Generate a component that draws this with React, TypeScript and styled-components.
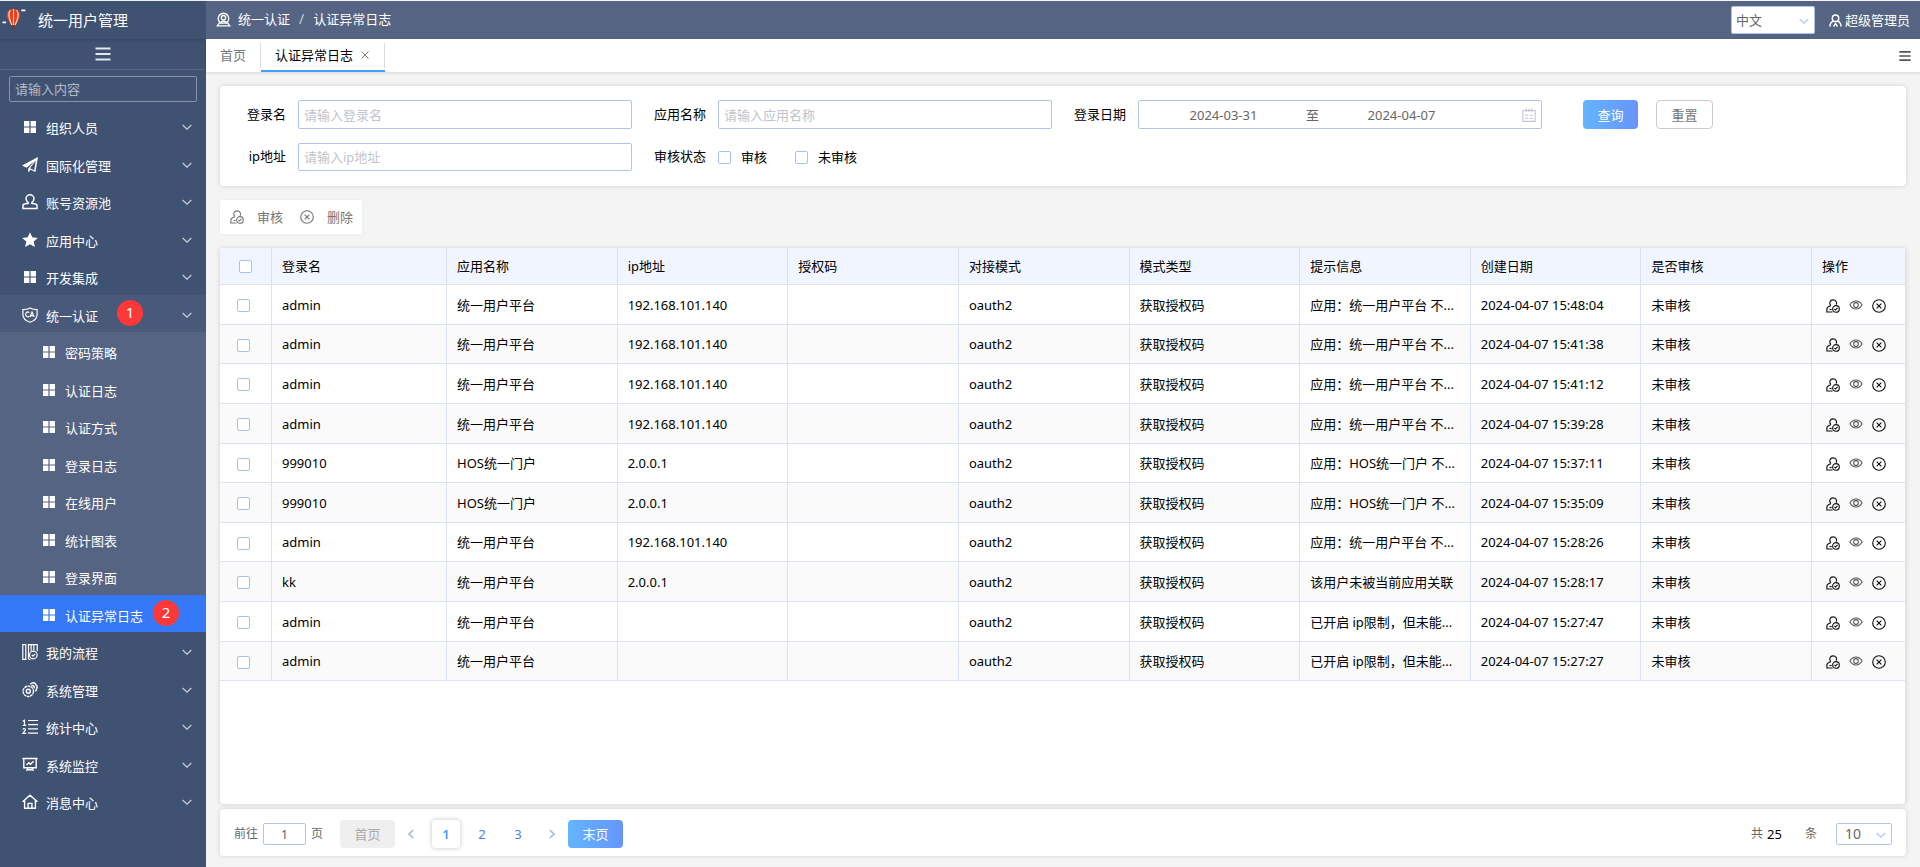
import React from 'react';
import styled, { createGlobalStyle } from 'styled-components';

const GlobalStyle = createGlobalStyle`
  *, *::before, *::after { box-sizing: border-box; }
  html, body, #root { height: 100%; }
  body {
    margin: 0;
    background: #f4f4f4;
    color: #000;
    font: 13px/20px "Noto Sans", "Noto Sans CJK SC", sans-serif;
  }
  button, input, select { font: inherit; color: inherit; margin: 0; }
  button { border: 0; background: none; padding: 0; cursor: pointer; }
  a { color: inherit; text-decoration: none; }
  ul, ol { list-style: none; margin: 0; padding: 0; }
  svg { display: block; flex: none; }
`;

/* ---------- icons ---------- */

type IconProps = { size?: number };

const Line = ({ size = 16, children, width = 1.2 }: IconProps & { children: React.ReactNode; width?: number }) => (
  <svg width={size} height={size} viewBox="0 0 16 16" fill="none" stroke="currentColor" strokeWidth={width} aria-hidden="true">
    {children}
  </svg>
);

const GridIcon = () => (
  <svg width="16" height="16" viewBox="0 0 16 16" fill="currentColor" aria-hidden="true">
    <path d="M2 2h5.400v5.400H2zM8.600 2H14v5.400H8.600zM2 8.600h5.400V14H2zM8.600 8.600H14V14H8.600z" />
  </svg>
);
const PlaneIcon = () => (
  <svg width="16" height="16" viewBox="0 0 16 16" fill="currentColor" aria-hidden="true">
    <path fillRule="evenodd" d="M16 0 0 8.600l4.600 2.200L12.600 4 6.200 11.600V15.600l2.400-2.900 4.800 2.300zM8 11.200l5.800-7.600-1.600 9.600z" />
  </svg>
);
const StampIcon = () => (
  <Line width={1.5}>
    <path d="M6.300 8.600C4.600 7.400 4 6.300 4 4.800a4 4 0 0 1 8 0c0 1.500-.6 2.600-2.300 3.800M6.300 8.500v.8L2.500 10c-1 .2-1.500.8-1.500 1.600v2.800h14v-2.800c0-.8-.5-1.400-1.500-1.600l-3.800-.7v-.8" />
  </Line>
);
const StarIcon = () => (
  <svg width="16" height="16" viewBox="0 0 16 16" fill="currentColor" aria-hidden="true">
    <path d="m8 .3 2.300 5 5.500.6-4.100 3.700 1.200 5.500L8 12.300l-4.900 2.800 1.200-5.500L.2 5.900l5.500-.6z" />
  </svg>
);
const ShieldIcon = () => (
  <Line width={1.2}>
    <path d="M8 .9c2 1.200 4.400 1.700 7.100 1.700v5c0 3.700-2.700 6.300-7.100 7.700C3.600 13.900.9 11.300.9 7.600v-5C3.600 2.600 6 2.100 8 .9z" />
    <path d="M7.300 5.600a2.300 2.300 0 1 0 0 3.600M8 10l2-5 2.200 5M8.800 8.600h2.700" />
  </Line>
);
const BooksIcon = () => (
  <Line width={1.2}>
    <path d="M.8.7v14.600h3V.7zM6.500 15.300V.7h2.600v6M9.100.7h2.700v5.500M11.800.7h3.400v6.600M6.500 15.300h2" />
    <circle cx="11.300" cy="11" r="3.800" />
    <path d="m9.800 11 1.100 1.200L13 10" />
  </Line>
);
const GearsIcon = () => (
  <Line width={1.4}>
    <circle cx="6.300" cy="9.300" r="5.200" strokeDasharray="2.800 .5" />
    <circle cx="6.300" cy="9.300" r="2" />
    <path d="M8.200 2.300c2-1.700 4.200-1.500 5.200-.6.500.5.500 1.100.6 1.500.9.500 1.300 1.200 1.200 2.300-.2.400-.6.700-.7 1.100.2 1-.2 2-1.300 2.600M9.500 3.600c1.800-.5 3.100.9 2.900 2.700" />
  </Line>
);
const OrderedIcon = () => (
  <Line width={1.2}>
    <path d="M6 1.500h10M6 5.700h10M6 9.900h10M6 14.100h10" />
    <path d="M.8 2.200 2.500 1.300v5M.8 6.300h3.400M.8 10.500c.8-1.300 3-.9 2.600.6L.9 14.300h3.400" />
  </Line>
);
const BoardIcon = () => (
  <Line width={1.4}>
    <path d="M.4 1.500h15.200M1.800 1.500v9.300h12.400V1.500M4.500 7.900l2.300-2.100 1.600 1.500 3.200-3M5.800 11 4.600 14M10.200 11l1.200 3M6 12.800h4" />
  </Line>
);
const HomeIcon = () => (
  <Line width={1.4}>
    <path d="m.6 7.800 7.400-6.600 7.400 6.600M2.600 6.500v7.700h10.800V6.500M6.100 14V9.400h3.800V14" />
  </Line>
);
const MenuIcon = ({ size = 16 }: IconProps) => (
  <Line size={size} width={2.2}>
    <path d="M.5 2.500h15M.5 8h15M.5 13.500h15" />
  </Line>
);
const ChevronIcon = ({ size = 10 }: IconProps) => (
  <svg width={size} height={size} viewBox="0 0 10 10" fill="none" stroke="currentColor" strokeWidth="1.200" aria-hidden="true">
    <path d="M.7 3 5 7.200 9.300 3" />
  </svg>
);
const SideChevron = ({ left }: { left?: boolean }) => (
  <svg width="12" height="12" viewBox="0 0 12 12" fill="none" stroke="currentColor" strokeWidth="1.700" aria-hidden="true">
    <path d={left ? 'M8.200 2 4 6l4.200 4' : 'M3.800 2 8 6l-4.200 4'} />
  </svg>
);
const PinUserIcon = () => (
  <Line size={15} width={1.4}>
    <path d="M4.800 11.500A5.600 5.600 0 1 1 11.200 11.500M4.300 10.900 1.300 14.800h13.400l-3-3.900" />
    <circle cx="8" cy="6" r="2.300" />
    <path d="M4.800 11.800c.6-2.600 5.800-2.600 6.400 0z" />
  </Line>
);
const AdminIcon = () => (
  <Line size={13} width={1.7}>
    <circle cx="8" cy="5.200" r="4" />
    <path d="M5.500 8.600C2.700 10 1.200 12 1 15.500M10.500 8.600c2.800 1.400 4.300 3.400 4.500 6.900M5.600 15.500 8 11.500l2.400 4" />
  </Line>
);
const AuditIcon = ({ size = 14 }: IconProps) => (
  <Line size={size} width={1.3}>
    <path d="M5.600 7.500C3 5 4.500 1 8 1s5 3.200 3.500 5.500M5.600 7.500C3 8.500 1 9.200 1 11v3.800h6.500" />
    <path d="M4 12h2.500" />
    <circle cx="11.400" cy="11.300" r="3.800" />
    <path d="m9.700 11.300 1.200 1.300 2.300-2.500" />
  </Line>
);
const EyeIcon = () => (
  <Line size={14} width={1.2}>
    <path d="M1 8c3.800-6 10.200-6 14 0-3.800 6-10.200 6-14 0z" />
    <circle cx="8" cy="8" r="2.700" />
  </Line>
);
const CloseCircleIcon = () => (
  <Line size={14} width={1.3}>
    <circle cx="8" cy="8" r="7.200" />
    <path d="m5.300 5.300 5.400 5.400M10.700 5.300l-5.400 5.400" />
  </Line>
);
const CloseIcon = () => (
  <Line size={8} width={2}>
    <path d="m1 1 14 14M15 1 1 15" />
  </Line>
);
const CalendarIcon = () => (
  <Line size={14} width={1.2}>
    <path d="M1 2.800h14v12.500H1zM4.700.5v4M11.300.5v4M8 .5v4M3.500 8.300h3.700M8.800 8.300h3.700M3.500 11.700h3.700M8.800 11.700h3.700" />
  </Line>
);
const BalloonLogo = () => (
  <svg width="26" height="26" viewBox="0 0 26 26" aria-hidden="true">
    <path d="M13.500 2C9 2 6.800 5 6.800 8.600c0 3.700 3 6.400 4.700 9.400h4c1.700-3 4.700-5.700 4.700-9.400C20.200 5 18 2 13.500 2z" fill="#e8431f" />
    <path d="M10.200 3c-2 3-1.300 9 1.600 15M16.800 3c2 3 1.300 9-1.600 15" fill="none" stroke="#ffd9c4" strokeWidth="1.200" />
    <path d="M13.500 2v16" stroke="#ffd9c4" strokeWidth="1" />
    <path d="M11.600 19.500h3.800V22h-3.800z" fill="#7c3a2b" />
    <path d="M22 3.400h2.600M3.300 15.400h2" stroke="#fff" strokeWidth="1.800" strokeLinecap="round" />
  </svg>
);

/* ---------- shell ---------- */

const Shell = styled.div`
  display: flex;
  min-height: 100vh;
  border-top: 1px solid #f4f6f9;
`;

const Sidebar = styled.nav`
  width: 206px;
  flex: none;
  background: #405272;
  color: #fff;
`;

const Brand = styled.div`
  display: flex;
  align-items: center;
  gap: 12px;
  height: 38px;
  font-size: 15px;
  box-shadow: 0 1px 3px rgba(0, 0, 0, 0.16);
`;

const CollapseButton = styled.button`
  display: flex;
  align-items: center;
  justify-content: center;
  width: 100%;
  height: 31px;
  border-bottom: 1px solid #566585;
  color: #e2e6ed;
`;

const MenuSearch = styled.input`
  display: block;
  width: calc(100% - 18px);
  height: 26px;
  margin: 6px 9px 5px;
  padding: 0 5px;
  border: 1px solid #8793a9;
  border-radius: 2px;
  background: transparent;
  outline: 0;
  &::placeholder { color: #b4bbc8; opacity: 1; }
`;

const MenuRow = styled.a<{ $open?: boolean; $active?: boolean; $nested?: boolean }>`
  display: flex;
  align-items: center;
  gap: 8px;
  height: 100%;
  padding: 2px 14px 0 ${(p) => (p.$nested ? 41 : 22)}px;
  background: ${(p) => (p.$active ? '#3478f8' : p.$open ? '#495979' : 'transparent')};
`;

const MenuItem = styled.li`
  height: 38px;
  &:nth-child(even) { height: 37px; }
`;

const MenuGroup = styled.li`
  > a { height: 37px; }
`;

const SubMenu = styled.ul`
  background: #556482;
`;

const RowLabel = styled.span`
  padding-top: 2px;
`;

const RowArrow = styled.span`
  margin-left: auto;
  color: #c9cfda;
`;

const Badge = styled.span<{ $gap: number }>`
  display: flex;
  justify-content: center;
  width: 26px;
  height: 26px;
  margin: -4px 0 0 ${(p) => p.$gap}px;
  border-radius: 50%;
  background: #fd3838;
  font-size: 15px;
  line-height: 24px;
`;

const Main = styled.div`
  flex: 1;
  min-width: 0;
  display: flex;
  flex-direction: column;
`;

const TopBar = styled.header`
  display: flex;
  align-items: center;
  height: 38px;
  padding: 0 10px;
  background: #556482;
  color: #fff;
`;

const Crumbs = styled.nav`
  display: flex;
  align-items: center;
  gap: 7px;
  padding-bottom: 2px;
  margin-right: auto;
`;

const Slash = styled.span`
  padding: 0 2px;
  font-size: 14px;
  color: #c9cfda;
`;

const SelectBox = styled.span<{ $width: number; $height: number }>`
  position: relative;
  display: block;
  width: ${(p) => p.$width}px;
  height: ${(p) => p.$height}px;
  color: #b4c7ee;
  > svg {
    position: absolute;
    right: 6px;
    top: calc(50% - 4px);
    pointer-events: none;
  }
`;

const Select = styled.select<{ $indent: number; $large?: boolean }>`
  appearance: none;
  width: 100%;
  height: 100%;
  padding: 0 18px 0 ${(p) => p.$indent}px;
  border: 1px solid #b1c4ec;
  border-radius: 2px;
  background: #fff;
  color: #666;
  font-size: ${(p) => (p.$large ? 14 : 13)}px;
  line-height: 18px;
`;

const UserLink = styled.a`
  display: flex;
  align-items: center;
  gap: 3px;
  margin-left: 14px;
`;

const TabBar = styled.div`
  display: flex;
  height: 33px;
  padding-right: 9px;
  background: #fff;
  box-shadow: 0 1px 3px rgba(0, 0, 0, 0.14);
`;

const Tab = styled.a<{ $active?: boolean }>`
  display: flex;
  align-items: center;
  gap: 8px;
  padding: 0 ${(p) => (p.$active ? 16 : 15)}px 0 14px;
  color: ${(p) => (p.$active ? '#000' : '#777')};
  border-bottom: 2px solid ${(p) => (p.$active ? '#409eff' : 'transparent')};
  background: linear-gradient(#dcdcdc, #dcdcdc) right 4px / 1px 25px no-repeat;
  svg { color: #777; }
`;

const TabMenu = styled.button`
  margin-left: auto;
  color: #555;
`;

const Content = styled.main`
  flex: 1;
  display: flex;
  flex-direction: column;
  padding: 14px 14px 11px;
`;

const Card = styled.section`
  background: #fff;
  border-radius: 4px;
  box-shadow: 0 0 5px rgba(0, 0, 0, 0.14);
`;

/* ---------- filter form ---------- */

const FilterForm = styled.form`
  display: grid;
  grid-template-columns: 66px minmax(120px, 334px) 86px minmax(120px, 334px) 86px minmax(240px, 404px) auto;
  grid-template-rows: 29px 28px;
  row-gap: 14px;
  align-items: center;
  padding: 14px 12px 15px;
`;

const FieldLabel = styled.label`
  padding: 0 12px 2px 0;
  text-align: right;
  white-space: nowrap;
`;

const TextField = styled.input`
  width: 100%;
  height: 100%;
  padding: 0 5px;
  border: 1px solid #b1c4ec;
  border-radius: 2px;
  background: #fff;
  outline: 0;
  &::placeholder { color: #c0c4cc; opacity: 1; }
`;

const DateRange = styled.div`
  display: flex;
  align-items: center;
  height: 100%;
  padding: 0 5px 0 9px;
  border: 1px solid #b1c4ec;
  border-radius: 2px;
  color: #666;
  svg { color: #c0c4cc; margin-left: auto; }
`;

const DateInput = styled.input`
  width: 151px;
  min-width: 0;
  padding: 0;
  border: 0;
  outline: 0;
  text-align: center;
  background: transparent;
`;

const DateJoin = styled.span`
  width: 27px;
  text-align: center;
`;

const Options = styled.div`
  display: flex;
  align-items: center;
  gap: 28px;
`;

const Option = styled.label`
  display: flex;
  align-items: center;
  gap: 10px;
`;

const CheckBox = styled.input.attrs({ type: 'checkbox' })`
  appearance: none;
  display: block;
  flex: none;
  width: 13px;
  height: 13px;
  margin: 0;
  border: 1px solid #a9bfec;
  border-radius: 2px;
  background: #fff;
  &:checked { background: #409eff; }
`;

const FormButtons = styled.div`
  display: flex;
  gap: 18px;
  height: 100%;
  padding-left: 41px;
`;

const Button = styled.button<{ $kind: 'primary' | 'plain' | 'muted' }>`
  width: ${(p) => (p.$kind === 'plain' ? 57 : 55)}px;
  height: 100%;
  border-radius: 4px;
  border: ${(p) => (p.$kind === 'plain' ? '1px solid #ccc' : '0')};
  color: ${(p) => ({ primary: '#fff', plain: '#777', muted: '#aaa' })[p.$kind]};
  background: ${(p) =>
    ({ primary: 'linear-gradient(90deg, #63b5fc, #6695f9)', plain: '#fff', muted: '#efefef' })[p.$kind]};
`;

/* ---------- toolbar and table ---------- */

const Toolbar = styled.div`
  display: flex;
  align-self: flex-start;
  gap: 17px;
  height: 34px;
  margin: 14px 0;
  padding: 0 9px 0 10px;
  background: #fff;
  border-radius: 2px;
  box-shadow: 0 0 3px rgba(0, 0, 0, 0.06);
  color: #777;
`;

const ToolButton = styled.button`
  display: flex;
  align-items: center;
  gap: 13px;
`;

const TableCard = styled(Card)`
  flex: 1;
  border-right: 1px solid #dbe3ef;
`;

const Table = styled.table`
  width: 100%;
  border-collapse: separate;
  border-spacing: 0;
  table-layout: fixed;
`;

const HeadCell = styled.th<{ $width?: number }>`
  width: ${(p) => (p.$width ? `${p.$width}px` : 'auto')};
  height: 37px;
  padding: 0 9px 0 10px;
  border-right: 1px solid #dbe3ef;
  border-bottom: 1px solid #dbe3ef;
  background: #f0f5ff;
  font-weight: 400;
  text-align: left;
  white-space: nowrap;
  &:first-child { padding-left: 19px; }
  &:last-child { border-right: 0; }
`;

const BodyRow = styled.tr`
  height: 40px;
  &:nth-child(5n + 2), &:nth-child(5n) { height: 39px; }
  &:nth-child(even) { background: #fafafa; }
`;

const Cell = styled.td`
  padding: 0 9px 0 10px;
  border-right: 1px solid #dbe3ef;
  border-bottom: 1px solid #dbe3ef;
  overflow: hidden;
  white-space: nowrap;
  &:first-child { padding: 2px 0 0 17px; }
  &:last-child { padding-top: 2px; border-right: 0; }
`;

const RowActions = styled.div`
  display: flex;
  align-items: center;
  gap: 9px;
  padding-left: 4px;
`;

const IconButton = styled.button<{ $soft?: boolean }>`
  color: ${(p) => (p.$soft ? '#555' : '#111')};
  ${(p) => (p.$soft ? 'padding-bottom: 2px;' : '')}
`;

/* ---------- pagination ---------- */

const Pager = styled(Card)`
  display: flex;
  align-items: center;
  height: 47px;
  margin-top: 5px;
  padding: 2px 14px 0;
  color: #666;
  font-size: 12px;
`;

const JumpLabel = styled.label`
  display: flex;
  align-items: center;
  gap: 5px;
  margin-right: 17px;
`;

const JumpInput = styled.input`
  width: 43px;
  height: 22px;
  padding: 0;
  border: 1px solid #b1c4ec;
  border-radius: 2px;
  outline: 0;
  text-align: center;
  font-size: 13px;
`;

const PageList = styled.div`
  display: flex;
  align-items: center;
  height: 28px;
  font-size: 13px;
`;

const PageArrow = styled.button`
  display: flex;
  align-items: center;
  justify-content: center;
  width: 32px;
  height: 28px;
  color: #a9bcd6;
`;

const Pages = styled.span`
  display: flex;
  gap: 8px;
  padding: 0 4px 0 5px;
`;

const Page = styled.button<{ $current?: boolean }>`
  width: 28px;
  height: 28px;
  border-radius: 4px;
  color: ${(p) => (p.$current ? '#409eff' : '#4a7df5')};
  font-weight: ${(p) => (p.$current ? 600 : 400)};
  box-shadow: ${(p) => (p.$current ? '0 0 5px rgba(0, 0, 0, 0.24)' : 'none')};
`;

const Total = styled.p`
  display: flex;
  gap: 4px;
  margin: 0 19px 0 auto;
`;

const TotalCount = styled.span`
  font-size: 13px;
  color: #000;
`;

const TotalUnit = styled.span`
  padding-left: 19px;
`;

/* ---------- data ---------- */

const topMenu = [
  { label: '组织人员', Icon: GridIcon },
  { label: '国际化管理', Icon: PlaneIcon },
  { label: '账号资源池', Icon: StampIcon },
  { label: '应用中心', Icon: StarIcon },
  { label: '开发集成', Icon: GridIcon },
];
const authMenu = ['密码策略', '认证日志', '认证方式', '登录日志', '在线用户', '统计图表', '登录界面', '认证异常日志'];
const bottomMenu = [
  { label: '我的流程', Icon: BooksIcon },
  { label: '系统管理', Icon: GearsIcon },
  { label: '统计中心', Icon: OrderedIcon },
  { label: '系统监控', Icon: BoardIcon },
  { label: '消息中心', Icon: HomeIcon },
];

const columns = ['登录名', '应用名称', 'ip地址', '授权码', '对接模式', '模式类型', '提示信息', '创建日期', '是否审核'];

const platform = '统一用户平台';
const portal = 'HOS统一门户';
const rows = [
  ['admin', platform, '192.168.101.140', '应用：统一用户平台 不...', '15:48:04'],
  ['admin', platform, '192.168.101.140', '应用：统一用户平台 不...', '15:41:38'],
  ['admin', platform, '192.168.101.140', '应用：统一用户平台 不...', '15:41:12'],
  ['admin', platform, '192.168.101.140', '应用：统一用户平台 不...', '15:39:28'],
  ['999010', portal, '2.0.0.1', '应用：HOS统一门户 不...', '15:37:11'],
  ['999010', portal, '2.0.0.1', '应用：HOS统一门户 不...', '15:35:09'],
  ['admin', platform, '192.168.101.140', '应用：统一用户平台 不...', '15:28:26'],
  ['kk', platform, '2.0.0.1', '该用户未被当前应用关联', '15:28:17'],
  ['admin', platform, '', '已开启 ip限制，但未能...', '15:27:47'],
  ['admin', platform, '', '已开启 ip限制，但未能...', '15:27:27'],
];

/* ---------- parts ---------- */

type Entry = { label: string; Icon: () => React.ReactElement };

const TopEntry = ({ label, Icon }: Entry) => (
  <MenuItem>
    <MenuRow href="#">
      <Icon />
      <RowLabel>{label}</RowLabel>
      <RowArrow><ChevronIcon /></RowArrow>
    </MenuRow>
  </MenuItem>
);

const LogRow = ({ data }: { data: string[] }) => {
  const [login, app, ip, message, time] = data;
  return (
    <BodyRow>
      <Cell><CheckBox aria-label={`${login} ${time}`} /></Cell>
      <Cell>{login}</Cell>
      <Cell>{app}</Cell>
      <Cell>{ip}</Cell>
      <Cell />
      <Cell>oauth2</Cell>
      <Cell>获取授权码</Cell>
      <Cell>{message}</Cell>
      <Cell>2024-04-07 {time}</Cell>
      <Cell>未审核</Cell>
      <Cell>
        <RowActions>
          <IconButton type="button" aria-label="审核"><AuditIcon /></IconButton>
          <IconButton type="button" aria-label="查看" $soft><EyeIcon /></IconButton>
          <IconButton type="button" aria-label="删除"><CloseCircleIcon /></IconButton>
        </RowActions>
      </Cell>
    </BodyRow>
  );
};

export default function App() {
  return (
    <>
      <GlobalStyle />
      <Shell>
        <Sidebar>
          <Brand><BalloonLogo />统一用户管理</Brand>
          <CollapseButton type="button" aria-label="收起菜单"><MenuIcon /></CollapseButton>
          <MenuSearch placeholder="请输入内容" aria-label="请输入内容" />
          <ul>
            {topMenu.map((m) => <TopEntry key={m.label} {...m} />)}
            <MenuGroup>
              <MenuRow href="#" $open>
                <ShieldIcon />
                <RowLabel>统一认证</RowLabel>
                <Badge $gap={11}>1</Badge>
                <RowArrow><ChevronIcon /></RowArrow>
              </MenuRow>
              <SubMenu>
                {authMenu.map((label) => {
                  const active = label === '认证异常日志';
                  return (
                    <MenuItem key={label}>
                      <MenuRow href="#" $nested $active={active}>
                        <GridIcon />
                        <RowLabel>{label}</RowLabel>
                        {active && <Badge $gap={2}>2</Badge>}
                      </MenuRow>
                    </MenuItem>
                  );
                })}
              </SubMenu>
            </MenuGroup>
            {bottomMenu.map((m) => <TopEntry key={m.label} {...m} />)}
          </ul>
        </Sidebar>

        <Main>
          <TopBar>
            <Crumbs aria-label="breadcrumb">
              <PinUserIcon />
              <a href="#">统一认证</a>
              <Slash>/</Slash>
              <a href="#">认证异常日志</a>
            </Crumbs>
            <SelectBox $width={84} $height={28}>
              <Select $indent={4} aria-label="语言" defaultValue="zh"><option value="zh">中文</option></Select>
              <ChevronIcon />
            </SelectBox>
            <UserLink href="#"><AdminIcon />超级管理员</UserLink>
          </TopBar>
          <TabBar>
            <Tab href="#">首页</Tab>
            <Tab href="#" $active>认证异常日志<CloseIcon /></Tab>
            <TabMenu type="button" aria-label="标签菜单"><MenuIcon size={12} /></TabMenu>
          </TabBar>

          <Content>
            <Card>
              <FilterForm>
                <FieldLabel htmlFor="login">登录名</FieldLabel>
                <TextField id="login" placeholder="请输入登录名" />
                <FieldLabel htmlFor="app">应用名称</FieldLabel>
                <TextField id="app" placeholder="请输入应用名称" />
                <FieldLabel htmlFor="from">登录日期</FieldLabel>
                <DateRange>
                  <DateInput id="from" defaultValue="2024-03-31" />
                  <DateJoin>至</DateJoin>
                  <DateInput aria-label="结束日期" defaultValue="2024-04-07" />
                  <CalendarIcon />
                </DateRange>
                <FormButtons>
                  <Button type="button" $kind="primary">查询</Button>
                  <Button type="reset" $kind="plain">重置</Button>
                </FormButtons>
                <FieldLabel htmlFor="ip">ip地址</FieldLabel>
                <TextField id="ip" placeholder="请输入ip地址" />
                <FieldLabel as="span">审核状态</FieldLabel>
                <Options>
                  <Option><CheckBox />审核</Option>
                  <Option><CheckBox />未审核</Option>
                </Options>
              </FilterForm>
            </Card>

            <Toolbar>
              <ToolButton type="button"><AuditIcon />审核</ToolButton>
              <ToolButton type="button"><CloseCircleIcon />删除</ToolButton>
            </Toolbar>

            <TableCard>
              <Table>
                <thead>
                  <tr>
                    <HeadCell $width={52}><CheckBox aria-label="全选" /></HeadCell>
                    {columns.map((c, i) => <HeadCell key={c} $width={i === 0 ? 175 : undefined}>{c}</HeadCell>)}
                    <HeadCell $width={93}>操作</HeadCell>
                  </tr>
                </thead>
                <tbody>
                  {rows.map((r) => <LogRow key={r[4]} data={r} />)}
                </tbody>
              </Table>
            </TableCard>

            <Pager>
              <JumpLabel>前往<JumpInput defaultValue="1" />页</JumpLabel>
              <PageList>
                <Button type="button" $kind="muted">首页</Button>
                <PageArrow type="button" aria-label="上一页"><SideChevron left /></PageArrow>
                <Pages>
                  <Page type="button" $current>1</Page>
                  <Page type="button">2</Page>
                  <Page type="button">3</Page>
                </Pages>
                <PageArrow type="button" aria-label="下一页"><SideChevron /></PageArrow>
                <Button type="button" $kind="primary">末页</Button>
              </PageList>
              <Total>共<TotalCount>25</TotalCount><TotalUnit>条</TotalUnit></Total>
              <SelectBox $width={56} $height={22}>
                <Select $indent={8} $large aria-label="每页条数" defaultValue="10"><option>10</option></Select>
                <ChevronIcon />
              </SelectBox>
            </Pager>
          </Content>
        </Main>
      </Shell>
    </>
  );
}
